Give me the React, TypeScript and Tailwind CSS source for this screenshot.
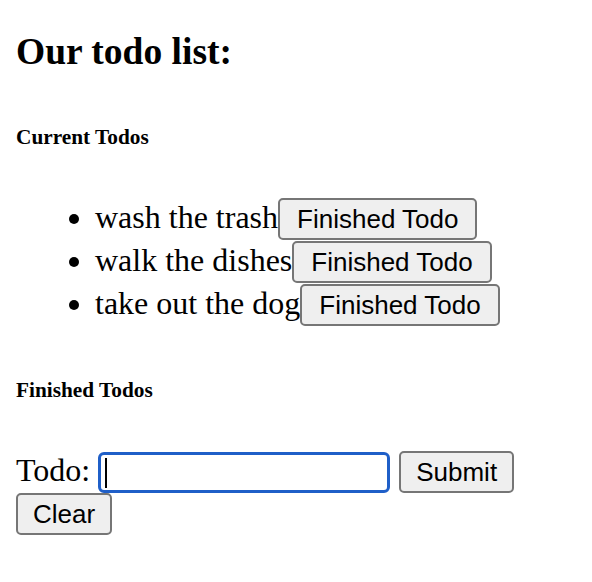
import React from "react";

const todos = ["wash the trash", "walk the dishes", "take out the dog"];

function Btn({ children, wide }: { children: React.ReactNode; wide?: boolean }) {
  return (
    <button
      type="button"
      className={
        wide
          ? "inline-block align-baseline border-2 border-[#767676] bg-[#efefef] rounded-[5px] px-[17px] py-[4px] text-[26px] leading-[30px] text-black"
          : "inline-block align-baseline border-2 border-[#767676] bg-[#efefef] rounded-[5px] px-[15px] py-[4px] text-[26px] leading-[30px] text-black"
      }
      style={{ fontFamily: '"Liberation Sans", Arial, sans-serif' }}
    >
      {children}
    </button>
  );
}

export default function App() {
  return (
    <div
      className="bg-white text-black min-h-[582px] px-[16px] pt-[31px]"
      style={{ fontFamily: '"Liberation Serif", "Times New Roman", serif' }}
    >
      <h1 className="text-[37.5px] leading-[42px] font-bold">Our todo list:</h1>
      <h6 className="mt-[52px] text-[21.3px] leading-[24px] font-bold">Current Todos</h6>
      <ul className="mt-[49px] list-disc pl-[79px] text-[32px] leading-[1.15]">
        {todos.map((t) => (
          <li key={t} className="h-[43px]">
            {t}
            <Btn wide>Finished Todo</Btn>
          </li>
        ))}
      </ul>
      <h6 className="mt-[51px] text-[21.3px] leading-[24px] font-bold">Finished Todos</h6>
      <div className="mt-[49px]">
        <div className="flex items-start">
          <label className="text-[32px] leading-[39px]">Todo:</label>
          <div className="ml-[8px] mt-[1px] w-[292px] h-[41px] border-[3px] border-[#1f5fc8] rounded-[6px] flex items-center pl-[4px]">
            <span className="block w-[2px] h-[30px] bg-black" />
          </div>
          <div className="ml-[9px]">
            <Btn>Submit</Btn>
          </div>
        </div>
        <div>
          <Btn>Clear</Btn>
        </div>
      </div>
    </div>
  );
}
